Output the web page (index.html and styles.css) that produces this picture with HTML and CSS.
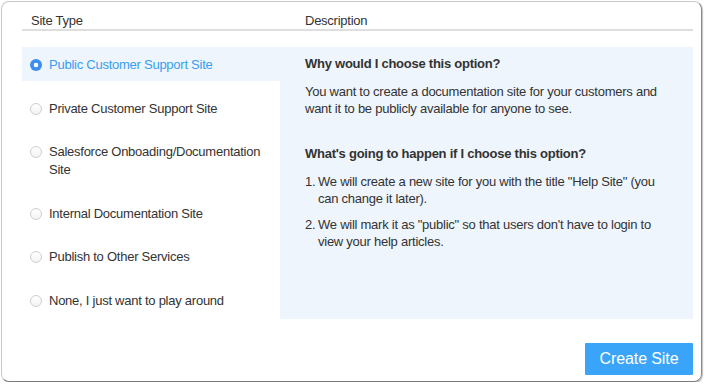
FILE: index.html
```html
<!DOCTYPE html>
<html>
<head>
<meta charset="utf-8">
<link rel="stylesheet" href="styles.css">
</head>
<body>
<div class="card">
  <div class="header">
    <div class="col-left"><span class="htitle">Site Type</span></div>
    <div class="col-right"><span class="htitle">Description</span></div>
  </div>
  <div class="main">
    <ul class="options">
      <li class="option selected"><span class="radio"></span><span class="label">Public Customer Support Site</span></li>
      <li class="option"><span class="radio"></span><span class="label">Private Customer Support Site</span></li>
      <li class="option"><span class="radio"></span><span class="label">Salesforce Onboading/Documentation Site</span></li>
      <li class="option"><span class="radio"></span><span class="label">Internal Documentation Site</span></li>
      <li class="option"><span class="radio"></span><span class="label">Publish to Other Services</span></li>
      <li class="option"><span class="radio"></span><span class="label">None, I just want to play around</span></li>
    </ul>
    <div class="panel">
      <h3 class="q">Why would I choose this option?</h3>
      <p class="para">You want to create a documentation site for your customers and want it to be publicly available for anyone to see.</p>
      <h3 class="q q2">What's going to happen if I choose this option?</h3>
      <ol class="steps">
        <li><span class="num">1.</span><span class="stext">We will create a new site for you with the title "Help Site" (you can change it later).</span></li>
        <li><span class="num">2.</span><span class="stext">We will mark it as "public" so that users don't have to login to view your help articles.</span></li>
      </ol>
    </div>
  </div>
  <div class="footer">
    <button class="btn">Create Site</button>
  </div>
</div>
</body>
</html>
```
FILE: styles.css
```css
* { box-sizing: border-box; }
html, body { margin: 0; padding: 0; background: #ffffff; }
body {
  font-family: "Liberation Sans", Arial, sans-serif;
  font-size: 13px;
  letter-spacing: -0.25px;
  color: #333333;
}
.card {
  margin: 1px 0 0 1px;
  width: 701px;
  height: 381px;
  border: 1px solid #c9c9c9;
  border-right-color: #8a8a8a;
  border-bottom-color: #7a7a7a;
  border-radius: 8px;
  box-shadow: 1px 1px 1px rgba(0,0,0,0.25);
  padding: 0 8px 0 20px;
  display: flex;
  flex-direction: column;
}
.header {
  display: flex;
  padding-top: 11px;
  height: 29px;
  border-bottom: 2px solid #dedede;
  line-height: 15px;
  font-size: 13px;
  color: #333;
}
.col-left { width: 258px; padding-left: 9px; }
.col-right { flex: 1; padding-left: 25px; }
.main {
  display: flex;
  margin-top: 16px;
}
.options {
  list-style: none;
  margin: 0;
  padding: 0;
  width: 258px;
  display: flex;
  flex-direction: column;
  gap: 9.6px;
}
.option {
  display: flex;
  align-items: flex-start;
  padding: 9px 10px 7px 8px;
  line-height: 18px;
  color: #333;
}
.option.selected {
  background: #eef5fc;
  color: #3a9df2;
}
.radio {
  flex: none;
  width: 12px;
  height: 12px;
  margin: 3px 7px 0 0;
  border-radius: 50%;
  border: 1px solid #cfcfcf;
  background: linear-gradient(#ffffff, #f3f3f3);
}
.option.selected .radio {
  border: none;
  background: radial-gradient(circle, #ffffff 0 2px, #3b8ff0 2.6px);
}
.panel {
  flex: 1;
  background: #eef5fc;
  height: 272px;
  padding: 8px 25px 0 25px;
}
.q {
  margin: 0;
  font-size: 13px;
  font-weight: bold;
  line-height: 18px;
  color: #333;
}
.q2 { margin-top: 28.5px; }
.para {
  margin: 9.5px 0 0 0;
  line-height: 17px;
}
.steps {
  list-style: none;
  margin: 9.5px 0 0 0;
  padding: 0;
  display: flex;
  flex-direction: column;
  gap: 9px;
}
.steps li {
  display: flex;
  line-height: 17px;
}
.num { width: 13px; flex: none; }
.stext { flex: 1; }
.footer {
  display: flex;
  justify-content: flex-end;
  margin-top: 24px;
}
.btn {
  font-family: "Liberation Sans", Arial, sans-serif;
  font-size: 16px;
  letter-spacing: -0.1px;
  color: #ffffff;
  background: #3aa5f8;
  border: none;
  border-radius: 1px;
  width: 108px;
  height: 32px;
  padding: 0;
}
```
